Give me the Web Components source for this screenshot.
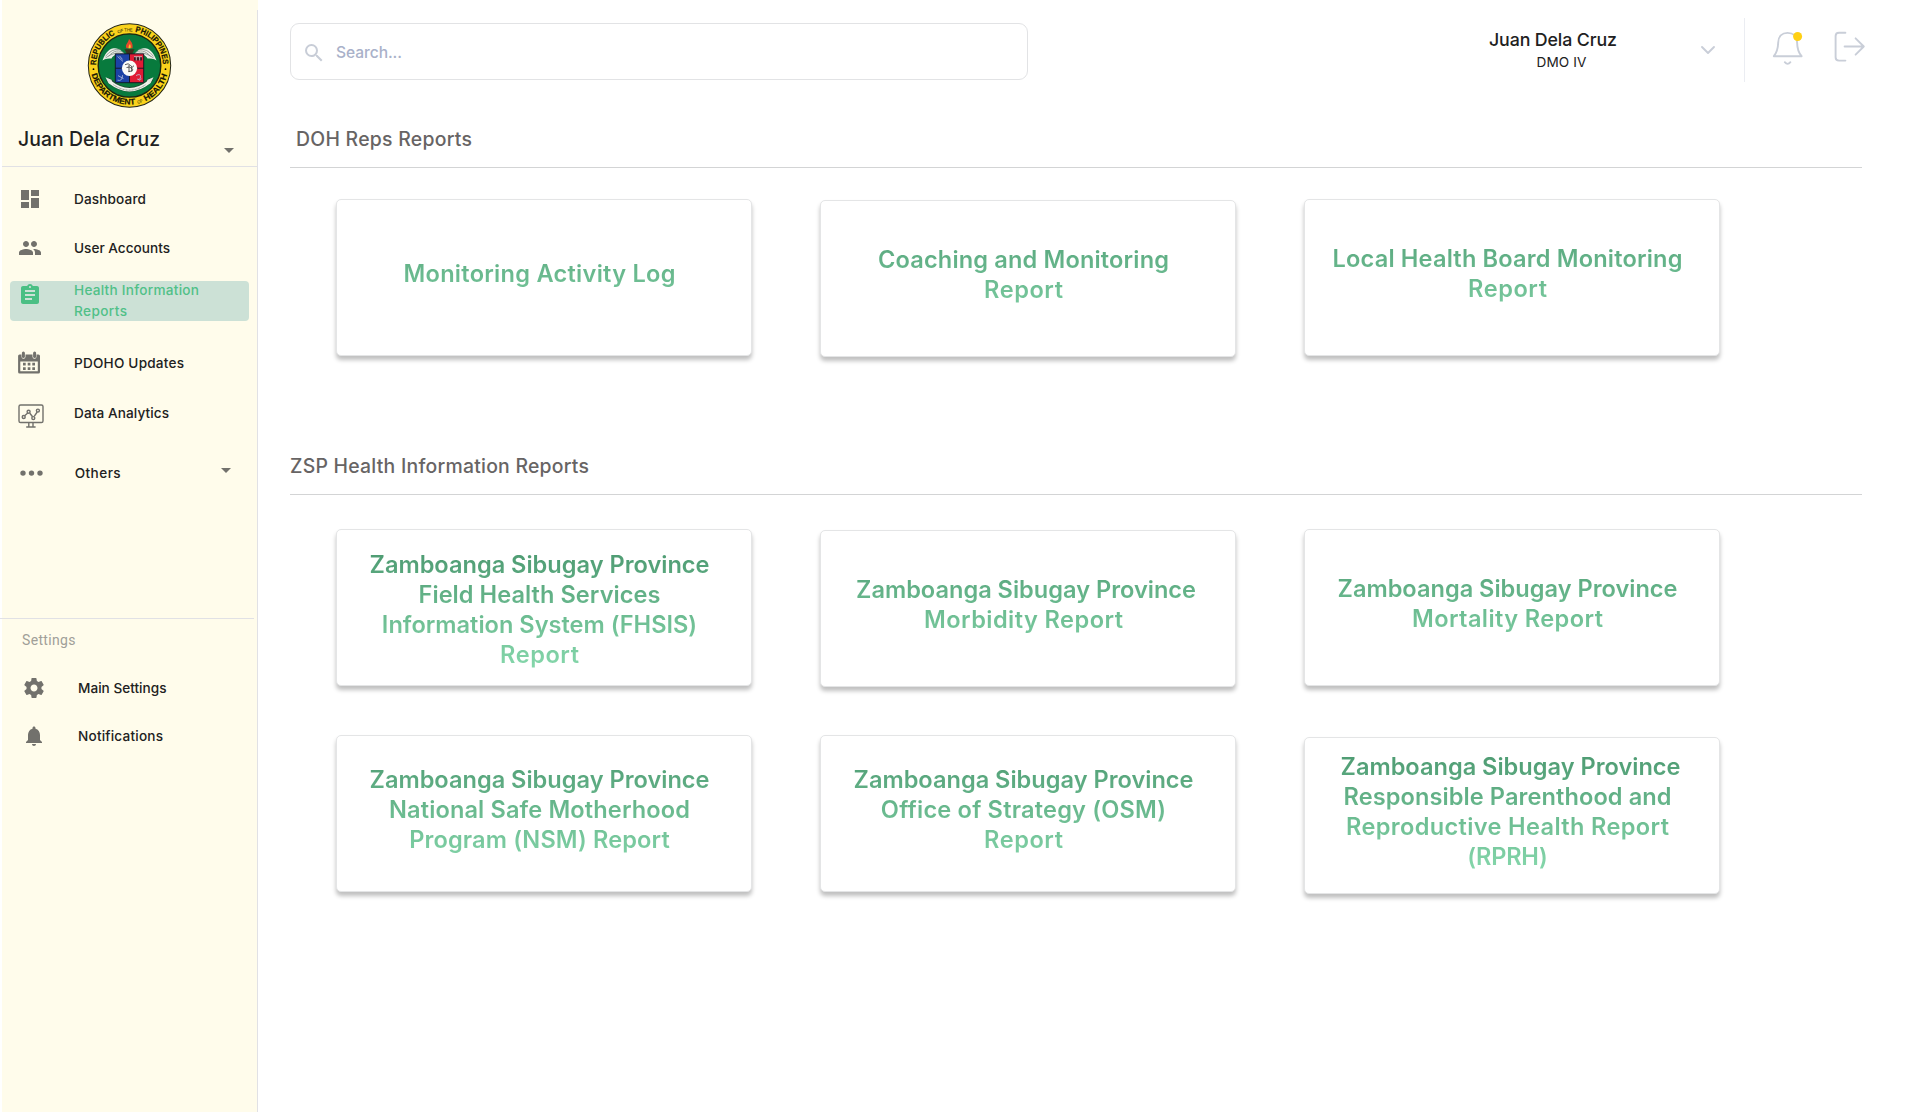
<!DOCTYPE html>
<html lang="en">
<head>
<meta charset="utf-8">
<title>Health Information Reports</title>
<style>
html,body{margin:0;padding:0;background:#fff}
body{font-family:Inter,"Open Sans",sans-serif;color:#212121;width:1920px;height:1112px;overflow:hidden}
</style>
</head>
<body>
<report-app>
  <side-bar slot="side"></side-bar>
  <top-bar slot="top"></top-bar>
  <report-section style="--indent:6px">
    <fit-text slot="heading" w="176">DOH Reps Reports</fit-text>
    <report-card><fit-text w="272">Monitoring Activity Log</fit-text></report-card>
    <report-card style="--drop:1px"><fit-text w="291">Coaching and Monitoring</fit-text><fit-text w="79">Report</fit-text></report-card>
    <report-card><fit-text w="350">Local Health Board Monitoring</fit-text><fit-text w="79">Report</fit-text></report-card>
  </report-section>
  <report-section style="--gap-top:95px;--row-top:34px">
    <fit-text slot="heading" w="299">ZSP Health Information Reports</fit-text>
    <report-card style="--lower:6px"><fit-text w="340">Zamboanga Sibugay Province</fit-text><fit-text w="242">Field Health Services</fit-text><fit-text w="315">Information System (FHSIS)</fit-text><fit-text w="79">Report</fit-text></report-card>
    <report-card style="--drop:1px;--shift:-2px"><fit-text w="340">Zamboanga Sibugay Province</fit-text><fit-text w="199" style="margin-right:5px">Morbidity Report</fit-text></report-card>
    <report-card><fit-text w="340">Zamboanga Sibugay Province</fit-text><fit-text w="191">Mortality Report</fit-text></report-card>
    <report-card><fit-text w="340">Zamboanga Sibugay Province</fit-text><fit-text w="301">National Safe Motherhood</fit-text><fit-text w="260">Program (NSM) Report</fit-text></report-card>
    <report-card><fit-text w="340">Zamboanga Sibugay Province</fit-text><fit-text w="285">Office of Strategy (OSM)</fit-text><fit-text w="79">Report</fit-text></report-card>
    <report-card style="--drop:2px;--shift:-1.5px"><fit-text w="340">Zamboanga Sibugay Province</fit-text><fit-text w="328" style="margin-right:6px">Responsible Parenthood and</fit-text><fit-text w="323" style="margin-right:6px">Reproductive Health Report</fit-text><fit-text w="80" style="margin-right:6px">(RPRH)</fit-text></report-card>
  </report-section>
</report-app>

<script>
const define = (name, html, after) => customElements.define(name, class extends HTMLElement {
  constructor() {
    super();
    this.attachShadow({ mode: 'open' }).innerHTML = html;
  }
  connectedCallback() { if (after) after(this, this.shadowRoot); }
});

define('report-app', `
<style>
:host{display:flex;width:1920px;height:1112px;background:#fff}
main{flex:1;display:flex;flex-direction:column;padding-left:32px}
</style>
<slot name="side"></slot>
<main><slot name="top"></slot><slot></slot></main>`);

define('report-section', `
<style>
:host{display:block;width:1572px;margin-top:var(--gap-top,0)}
h2{margin:0;font-size:19.4px;font-weight:500;line-height:28px;color:#676464;height:44px;display:flex;align-items:flex-start;border-bottom:1px solid #d3d4d5;box-sizing:border-box;padding:1px 0 0 var(--indent,0)}
.grid{display:grid;grid-template-columns:repeat(3,416px);column-gap:68px;row-gap:49px;margin:var(--row-top,31px) 0 0 46px;grid-auto-rows:157px}
</style>
<h2><slot name="heading"></slot></h2>
<div class="grid"><slot></slot></div>`);

define('report-card', `
<style>
:host{display:block;box-sizing:border-box;height:157px;border:1px solid #e4e5e6;border-radius:5px;background:#fff;box-shadow:0 4px 4px rgba(0,0,0,.25);margin-top:var(--drop,0)}
.title{display:flex;flex-direction:column;align-items:center;justify-content:center;height:124px;width:400px;margin:calc(12px + var(--lower,0px)) 0 0 calc(7px + var(--shift,-4.5px));font-size:23.6px;font-weight:600;line-height:30px;color:transparent;background:linear-gradient(#4c9970,#87d9ad);-webkit-background-clip:text;background-clip:text}
</style>
<div class="title"><slot></slot></div>`);

define('top-bar', `
<style>
:host{display:flex;align-items:flex-start;height:124px;box-sizing:border-box}
.search{display:flex;box-sizing:border-box;width:738px;height:57px;margin-top:23px;border:1px solid #e2e3e5;border-radius:9px;padding:17px 0 0 11px;gap:10px;font-size:15.6px;line-height:24px;font-weight:500;color:#a9b1c9}
.search svg{fill:#c8cdd7}
.who{display:flex;flex-direction:column;align-items:center;width:140px;margin:29px 0 0 455px;font-size:17.8px;font-weight:500;line-height:22px}
.who .role{font-size:13.6px;font-weight:400;line-height:22px;margin-left:17px}
svg{display:block;flex:none}
.chev{margin:42px 0 0 75px}
.rule{width:1px;height:64px;margin:18px 0 0 26px;background:#ebedf2}
.bell{margin:28px 0 0 25px}
.out{margin:28px 0 0 26px}
.line{fill:none;stroke:#c9ced8;stroke-width:1.9;stroke-linecap:round;stroke-linejoin:round}
</style>
<div class="search">
  <svg width="24" height="24" viewBox="0 0 24 24"><path d="M15.5 14h-.79l-.28-.27A6.47 6.47 0 0 0 16 9.5 6.5 6.5 0 1 0 9.5 16c1.61 0 3.09-.59 4.23-1.57l.27.28v.79l5 4.99L20.49 19l-4.99-5zm-6 0C7.01 14 5 11.99 5 9.5S7.01 5 9.5 5 14 7.01 14 9.5 11.99 14 9.5 14z"/></svg>
  <fit-text w="66">Search...</fit-text>
</div>
<div class="who"><fit-text w="128">Juan Dela Cruz</fit-text><fit-text class="role" w="50">DMO IV</fit-text></div>
<svg class="chev line" width="20" height="16" viewBox="0 0 20 16"><path d="M4 5l6 6 6-6"/></svg>
<div class="rule"></div>
<svg class="bell line" width="36" height="40" viewBox="1770 28 36 40"><path d="M1773.8 56.2C1777 52.5 1778 48 1778.2 42.5C1778.3 36.5 1782 32.9 1787.6 32.9C1793.2 32.9 1797 36.5 1797.1 42.5C1797.2 48 1798.3 52.5 1801.6 56.2Z"/><path d="M1784.8 62.2Q1787.6 65.6 1790.4 62.2"/><circle cx="1797.6" cy="36.5" r="4.5" fill="#ffd014" stroke="none"/></svg>
<svg class="out line" width="36" height="40" viewBox="1832 28 36 40"><path d="M1845.4 32.7H1839Q1835.6 32.7 1835.6 36.1V57.2Q1835.6 60.6 1839 60.6H1845.4M1844.6 46.5H1863.8M1855.6 38.3L1863.8 46.5L1855.6 54.7"/></svg>`);

define('side-bar', `
<style>
:host{display:flex;flex-direction:column;width:258px;height:1112px;background:linear-gradient(#e1e1e5,#e1e1e5) 257px 10px/1px 100% no-repeat,linear-gradient(90deg,#fff 2px,#fffceb 2px)}
doh-seal{margin:22px 0 0 87px}
.user{display:flex;justify-content:space-between;align-items:flex-start;height:59px;box-sizing:border-box;margin:0 1px 0 2px;padding:17px 23px 0 16px;border-bottom:1px solid #e1e1e5;font-size:19.4px;line-height:28px;font-weight:500}
.user svg{margin-top:23px}
svg{display:block;fill:#72716c}
nav{display:flex;flex-direction:column}
.settings{margin-top:125px;width:254px;border-top:1px solid #e1e1e5;height:51px;box-sizing:border-box;padding:11px 0 0 22px;font:400 14px/20px Roboto,sans-serif;color:#a09f98}
</style>
<doh-seal></doh-seal>
<div class="user"><fit-text w="142">Juan Dela Cruz</fit-text><svg width="10" height="5"><path d="M0 0h10L5 5z"/></svg></div>
<nav>
<nav-item style="--mt:12px">
  <svg slot="icon" width="28" height="28" viewBox="0 0 28 28"><path d="M3 13h8V3H3v10zm0 8h8v-6H3v6zm10 0h8V11h-8v10zm0-18v6h8V3h-8z"/></svg>
  <fit-text w="72">Dashboard</fit-text></nav-item>
<nav-item style="--mt:9px">
  <svg slot="icon" width="28" height="28" viewBox="0 0 28 28"><path d="M16 11c1.66 0 2.99-1.34 2.99-3S17.66 5 16 5s-3 1.34-3 3 1.34 3 3 3zm-8 0c1.66 0 2.99-1.34 2.99-3S9.66 5 8 5 5 6.34 5 8s1.34 3 3 3zm0 2c-2.33 0-7 1.17-7 3.5V19h14v-2.5c0-2.33-4.67-3.5-7-3.5zm8 0c-.29 0-.62.02-.97.05 1.16.84 1.97 1.97 1.97 3.45V19h6v-2.5c0-2.33-4.67-3.5-7-3.5z"/></svg>
  <fit-text w="96">User Accounts</fit-text></nav-item>
<nav-item active style="--mt:13px;--iy:2px;--ty:-1px">
  <svg slot="icon" width="28" height="28" viewBox="0 0 28 28" style="fill:#4abf84"><path d="M19 3h-4.18C14.4 1.84 13.3 1 12 1c-1.3 0-2.4.84-2.82 2H5c-1.1 0-2 .9-2 2v14c0 1.1.9 2 2 2h14c1.1 0 2-.9 2-2V5c0-1.1-.9-2-2-2zm-7 0c.55 0 1 .45 1 1s-.45 1-1 1-1-.45-1-1 .45-1 1-1zm2 14H7v-2h7v2zm3-4H7v-2h10v2zm0-4H7V7h10v2z"/></svg>
  <fit-text w="125">Health Information</fit-text><fit-text w="53">Reports</fit-text></nav-item>
<nav-item style="--mt:22px;--iy:7px">
  <svg slot="icon" width="28" height="28" viewBox="18 350 28 28"><path fill-rule="evenodd" d="M19.5 354.5h2v2.2a2 2 0 0 0 4 0v-2.2h7v2.2a2 2 0 0 0 4 0v-2.2h2q1.5 0 1.5 1.5v15.9q0 1.6-1.6 1.6H19.7q-1.6 0-1.6-1.6V356q0-1.5 1.4-1.5zM20.3 361.6v9.6h17.5v-9.6z"/><rect x="21.9" y="351.5" width="3" height="6.6" rx="1.5"/><rect x="33.1" y="351.5" width="3" height="6.6" rx="1.5"/><path d="M23 362.8h2.7v2.7H23zM27.7 362.8h2.7v2.7h-2.7zM32.3 362.8H35v2.7h-2.7zM23 367.3h2.7v2.7H23zM27.7 367.3h2.7v2.7h-2.7zM32.3 367.3H35v2.7h-2.7z"/></svg>
  <fit-text w="110">PDOHO Updates</fit-text></nav-item>
<nav-item style="--mt:10px;--iy:9px">
  <svg slot="icon" width="28" height="28" viewBox="18 402 28 28" style="fill:none;stroke:#72716c;stroke-width:1.4"><rect x="19" y="405" width="24" height="17.5" rx="1.6"/><path d="M28.8 422.5v4M33 422.5v4M26.2 427h9.4" /><path d="M24.6 415.7L27.8 413M29.8 413.2L32.6 416.8M34.2 416.4L37.2 412"/><circle cx="23.7" cy="417" r="1.5"/><circle cx="28.6" cy="411.8" r="1.5"/><circle cx="33.3" cy="418.1" r="1.5"/><circle cx="37.9" cy="410.6" r="1.5"/></svg>
  <fit-text w="95">Data Analytics</fit-text></nav-item>
<nav-item style="--mt:20px;--tx:.7px;--iy:7px">
  <svg slot="icon" width="28" height="28" viewBox="18 460 28 28"><circle cx="23" cy="473.1" r="2.7"/><circle cx="31.5" cy="473.1" r="2.7"/><circle cx="40" cy="473.1" r="2.7"/></svg>
  <fit-text w="46">Others</fit-text>
  <svg slot="end" width="10" height="5"><path d="M0 0h10L5 5z"/></svg></nav-item>
</nav>
<div class="settings"><fit-text w="53.5">Settings</fit-text></div>
<nav>
<nav-item style="--mt:-1px;--ix:4px">
  <svg slot="icon" width="28" height="28" viewBox="0 0 28 28"><path d="M19.43 12.98c.04-.32.07-.64.07-.98s-.03-.66-.07-.98l2.11-1.65c.19-.15.24-.42.12-.64l-2-3.46c-.12-.22-.39-.3-.61-.22l-2.49 1c-.52-.4-1.08-.73-1.69-.98l-.38-2.65A.488.488 0 0 0 14 2h-4c-.25 0-.46.18-.49.42l-.38 2.65c-.61.25-1.17.59-1.69.98l-2.49-1c-.23-.09-.49 0-.61.22l-2 3.46c-.13.22-.07.49.12.64l2.11 1.65c-.04.32-.07.65-.07.98s.03.66.07.98l-2.11 1.65c-.19.15-.24.42-.12.64l2 3.46c.12.22.39.3.61.22l2.49-1c.52.4 1.08.73 1.69.98l.38 2.65c.03.24.24.42.49.42h4c.25 0 .46-.18.49-.42l.38-2.65c.61-.25 1.17-.59 1.69-.98l2.49 1c.23.09.49 0 .61-.22l2-3.46c.12-.22.07-.49-.12-.64l-2.11-1.65zM12 15.5c-1.93 0-3.5-1.57-3.5-3.5s1.57-3.5 3.5-3.5 3.5 1.57 3.5 3.5-1.57 3.5-3.5 3.5z"/></svg>
  <fit-text w="88.5">Main Settings</fit-text></nav-item>
<nav-item style="--mt:8px;--ix:4px">
  <svg slot="icon" width="28" height="28" viewBox="0 0 28 28"><path d="M12 22c1.1 0 2-.9 2-2h-4c0 1.1.89 2 2 2zm6-6v-5c0-3.07-1.64-5.64-4.5-6.32V4c0-.83-.67-1.5-1.5-1.5s-1.5.67-1.5 1.5v.68C7.63 5.36 6 7.92 6 11v5l-2 2v1h16v-1l-2-2z"/></svg>
  <fit-text w="85">Notifications</fit-text></nav-item>
</nav>`);

define('nav-item', `
<style>
:host{display:flex;align-items:flex-start;box-sizing:border-box;height:40px;width:239px;margin:var(--mt,0) 0 0 10px;border-radius:4px;padding-left:calc(8px + var(--ix,0px));font-size:13.6px;font-weight:500;line-height:21px}
:host([active]){background:#cce1d6;color:#50c088}
.icon{width:28px;height:28px;margin-top:var(--iy,8px)}
.label{flex:1;display:flex;flex-direction:column;align-items:flex-start;margin:var(--ty,10px) 0 0 calc(28px + var(--tx,0px))}
.end{margin:15px 18px 0 0}
</style>
<div class="icon"><slot name="icon"></slot></div><div class="label"><slot></slot></div><div class="end"><slot name="end"></slot></div>`);

define('doh-seal', `
<style>:host{display:block;width:85px;height:86px}svg{display:block}text{font-family:"Liberation Sans",sans-serif;font-weight:700;font-size:8.1px;fill:#151505;stroke:#151505;stroke-width:.2}.s{font-size:4.6px;font-weight:400;stroke:none}</style>
<svg width="85" height="87" viewBox="-42.5 -43 85 86" preserveAspectRatio="none">
<defs><path id="up" d="M-33.4 -.3A33.4 33.4 0 0 1 33.4 -.3"/><path id="dn" d="M-37.8 8.6A38.8 38.8 0 0 0 38 7.6"/></defs>
<circle r="41.2" fill="#f9d21c" stroke="#222416" stroke-width="1"/>
<circle r="31.3" fill="#087a3d" stroke="#1b2610" stroke-width="1.4"/>
<text textLength="37.5" lengthAdjust="spacingAndGlyphs"><textPath href="#up" textLength="37.5" lengthAdjust="spacingAndGlyphs">REPUBLIC</textPath></text>
<text class="s"><textPath href="#up" startOffset="40.5" textLength="15" lengthAdjust="spacingAndGlyphs">OF THE</textPath></text>
<text><textPath href="#up" startOffset="58" textLength="46" lengthAdjust="spacingAndGlyphs">PHILIPPINES</textPath></text>
<text><textPath href="#dn" textLength="58" lengthAdjust="spacingAndGlyphs">DEPARTMENT</textPath></text>
<text class="s"><textPath href="#dn" startOffset="60.3" textLength="5.6" lengthAdjust="spacingAndGlyphs">OF</textPath></text>
<text><textPath href="#dn" startOffset="68.5" textLength="35" lengthAdjust="spacingAndGlyphs">HEALTH</textPath></text>
<circle cx="-36" cy="3.6" r=".9"/><circle cx="36" cy="3.6" r=".9"/>
<g id="w"><path d="M-4 -9C-6 -14 -11 -18 -16 -17C-22 -16 -25 -10 -27 -5C-24 -7 -21 -7 -18 -7C-16 -10 -14 -10 -14 -11Z" fill="#eef0ea"/><path d="M-5 -12C-10 -16 -16 -15 -21 -9M-6 -11C-11 -14 -17 -12 -24 -7.5M-9 -16Q-18 -17 -24 -9" fill="none" stroke="#75837a" stroke-width=".7"/></g>
<use href="#w" transform="scale(-1 1)"/>
<path d="M-5 -16H5L2.6 -11.3H-2.6Z" fill="#3b321d"/><path d="M-3 -17C-5 -21 -1 -22 -.5 -26.5C1 -24 4 -22 3 -17Z" fill="#e5482a"/><path d="M-1 -17Q-1 -20 .5 -21.5Q1.8 -19 1 -17Z" fill="#f9c92c"/>
<path d="M-14.2 -11.5H0V17H-14.2Z" fill="#1c42a6"/><path d="M0 -11.5H14.2V17H0Z" fill="#e01b35"/>
<path d="M-14.2 -11.5H14.2V17H-14.2ZM0 -11.5V17M-14.2 2.7H14.2" fill="none" stroke="#111522" stroke-width=".9"/>
<path d="M-12 -9L-6.5 -4M-10 -9.5L-7 -6M-12 14.5Q-7 16 -7 9.5M-11.5 10L-6 13M6.5 10Q11 7.5 11 11T8 13.5Q11 16 12 13" fill="none" stroke="#b6bfdc" stroke-width=".8"/>
<path d="M4.5 -8.6H12.5V-5H4.5Z" fill="#3b1d25"/><path d="M4.5 -8.7H12.5M6.8 -8.5V-5M10.1 -8.5V-5" stroke="#dfc8ca" stroke-width=".8"/>
<circle cy="2.7" r="7.6" fill="#fbfbf8"/><path d="M-4.5 -.8Q-1 -3 1 0T4.5 .2M-3 2Q0 .5 2.5 3T-1 6M-.5 -.5V6.5M2.2 1V6" fill="none" stroke="#353535" stroke-width=".8"/>
<path d="M-22 13.5Q0 34 22 13.5" fill="none" stroke="#1d4a31" stroke-width="4.6"/><path d="M-24 11.5L-18 14L-16.5 18.5L-21 17.5ZM24 11.5L18 14L16.5 18.5L21 17.5Z" fill="#e5e9e0"/><path d="M-19.5 16.5Q0 31.5 19.5 16.5" fill="none" stroke="#f0f2eb" stroke-width="3.4"/><path d="M-16 19Q0 29.8 16 19" fill="none" stroke="#7a857c" stroke-width=".9" stroke-dasharray="1 .5"/>
</svg>`);

/* A single line of text whose tracking is adjusted to fill the given width. */
define('fit-text', `
<style>:host{display:block;white-space:nowrap;flex:none}span{display:inline-block}</style><span><slot></slot></span>`,
(el, root) => {
  const span = root.querySelector('span');
  const target = parseFloat(el.getAttribute('w'));
  const n = el.textContent.length;
  const spacing = (target - span.getBoundingClientRect().width) / (n - 1);
  span.style.letterSpacing = spacing.toFixed(4) + 'px';
  span.style.marginRight = (-spacing).toFixed(4) + 'px';
});
</script>
</body>
</html>
